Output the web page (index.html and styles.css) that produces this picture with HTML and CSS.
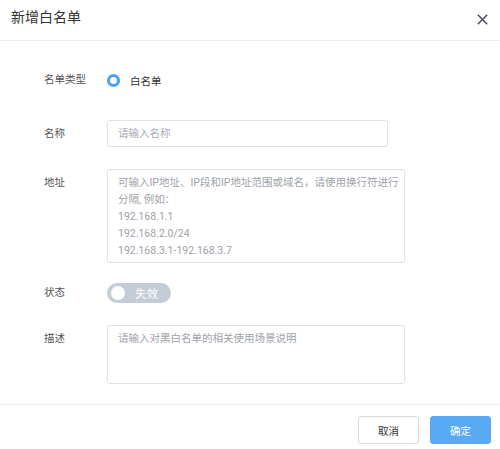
FILE: index.html
```html
<!DOCTYPE html>
<html lang="zh">
<head>
<meta charset="utf-8">
<link rel="stylesheet" href="styles.css">
</head>
<body>
<div class="dialog">
  <div class="header">
    <span class="title">新增白名单</span>
    <svg class="close" width="11" height="11" viewBox="0 0 11 11"><path d="M0.8 0.8L10.2 10.2M10.2 0.8L0.8 10.2" stroke="#4a4f57" stroke-width="1.5" fill="none"/></svg>
  </div>
  <div class="form">
    <div class="item center first">
      <div class="label">名单类型</div>
      <div class="radio"><span class="dot"></span><span class="radio-text">白名单</span></div>
    </div>
    <div class="item center gap30">
      <div class="label">名称</div>
      <div class="input">请输入名称</div>
    </div>
    <div class="item gap22">
      <div class="label">地址</div>
      <div class="textarea addr">可输入IP地址、IP段和IP地址范围或域名，请使用换行符进行<br>分隔, 例如：<br>192.168.1.1<br>192.168.2.0/24<br>192.168.3.1-192.168.3.7</div>
    </div>
    <div class="item center gap20 status">
      <div class="label">状态</div>
      <div class="switch"><span class="knob"></span><span class="switch-text">失效</span></div>
    </div>
    <div class="item gap22">
      <div class="label">描述</div>
      <div class="textarea desc">请输入对黑白名单的相关使用场景说明</div>
    </div>
  </div>
  <div class="footer">
    <button class="btn cancel">取消</button>
    <button class="btn ok">确定</button>
  </div>
</div>
</body>
</html>
```
FILE: styles.css
```css
* { box-sizing: border-box; }
body {
  margin: 0;
  background: #fff;
  font-family: Roboto, "Noto Sans CJK SC", sans-serif;
  color: #333;
}
.dialog { width: 500px; height: 449px; display: flex; flex-direction: column; }
.header {
  height: 41px;
  border-bottom: 1px solid #eceef1;
  display: flex;
  align-items: center;
  justify-content: space-between;
  padding: 0 12px 6px 11px;
}
.title { font-size: 14px; color: #333; line-height: 20px; }
.close { margin-top: 4px; }
.form { padding: 29px 0 0 44px; height: 364px; border-bottom: 1px solid #eceef1; }
.item { display: flex; align-items: flex-start; }
.item.center { align-items: center; }
.gap30 { margin-top: 30px; }
.gap22 { margin-top: 22px; }
.gap20 { margin-top: 20px; }
.label {
  width: 63px;
  font-size: 10.5px;
  color: #555;
  line-height: 27px;
  white-space: nowrap;
}
.first .label, .status .label { line-height: 20px; }
.radio { display: flex; align-items: center; height: 20px; }
.dot {
  width: 13px; height: 13px; border-radius: 50%;
  border: 3.5px solid #4a9ef5; background: #fff;
}
.radio-text { margin-left: 10px; font-size: 10.5px; color: #333; }
.input {
  width: 281px; height: 27px;
  border: 1px solid #dfe3ea; border-radius: 3px;
  font-size: 10.5px; color: #a7abb2;
  line-height: 25px; padding-left: 10px;
}
.textarea {
  width: 298px;
  border: 1px solid #dfe3ea; border-radius: 3px;
  font-size: 10.5px; color: #9ea2a9;
  line-height: 17px; padding: 4px 3px 4px 10px;
  white-space: nowrap;
}
.addr { height: 94px; }
.desc { height: 59px; }
.switch {
  width: 64px; height: 20px; border-radius: 10px;
  background: #c4ccd8;
  display: flex; align-items: center;
  padding-left: 4px;
}
.knob { width: 14px; height: 14px; border-radius: 50%; background: #fff; }
.switch-text { margin-left: 10px; font-size: 11.5px; color: #fff; }
.footer {
  flex: 1;
  display: flex; justify-content: flex-end; align-items: flex-start;
  padding: 11px 9px 0 0; gap: 11px;
}
.btn {
  width: 61px; height: 28px; border-radius: 3px;
  font-family: Roboto, "Noto Sans CJK SC", sans-serif;
  font-size: 10.5px; cursor: pointer;
}
.cancel { background: #fff; border: 1px solid #d6dbe2; color: #333; }
.ok { background: #5aa9f5; border: 1px solid #5aa9f5; color: #fff; }
```
